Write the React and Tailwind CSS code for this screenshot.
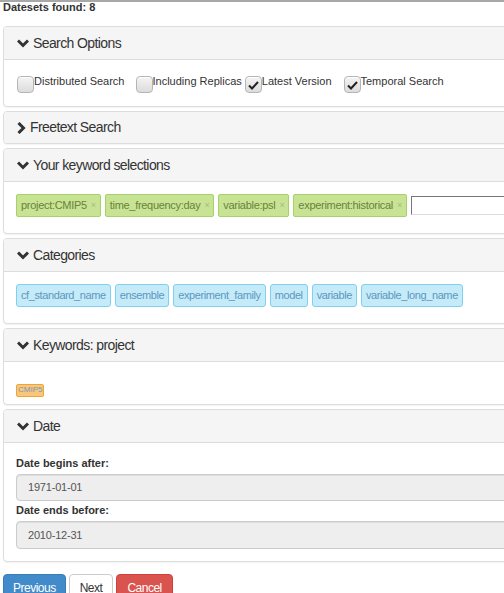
import React from "react";

const ChevronDown = () => (
  <svg width="12" height="9" viewBox="0 0 12 9" className="shrink-0">
    <path d="M1 1.5 L6 6.5 L11 1.5" fill="none" stroke="#333" strokeWidth="3" strokeLinejoin="miter" />
  </svg>
);

const ChevronRight = () => (
  <svg width="9" height="12" viewBox="0 0 9 12" className="shrink-0">
    <path d="M1.5 1 L6.5 6 L1.5 11" fill="none" stroke="#333" strokeWidth="3" strokeLinejoin="miter" />
  </svg>
);

const Panel = ({ title, open = true, children }) => (
  <div className="mb-[4px] w-[540px] rounded-[4px] border border-[#ddd] bg-white shadow-[0_1px_1px_rgba(0,0,0,0.05)]">
    <div
      className={
        "flex items-center gap-[4px] rounded-t-[3px] bg-[#f5f5f5] pl-[13px] text-[14px] tracking-[-0.6px] text-[#333] " +
        (open ? "h-[33px] border-b border-[#ddd]" : "h-[31px] rounded-b-[3px]")
      }
    >
      {open ? <ChevronDown /> : <ChevronRight />}
      <span>{title}</span>
    </div>
    {open && children}
  </div>
);

const Checkbox = ({ label, checked, className = "" }) => (
  <label className={"flex items-start " + className}>
    <span className="flex h-[17px] w-[17px] items-end justify-center rounded-[4px] border border-[#b5b5b5] bg-gradient-to-b from-[#f4f4f4] to-[#dcdcdc] pb-[2px] shadow-[inset_0_1px_0_#fff]">
      {checked && (
        <svg width="11" height="9" viewBox="0 0 11 9">
          <path d="M1 4.5 L4 7.5 L10 1" fill="none" stroke="#222" strokeWidth="2" />
        </svg>
      )}
    </span>
    <span className="-mt-[3px] text-[11px] text-[#333]">{label}</span>
  </label>
);

const GreenTag = ({ text }) => (
  <span className="flex h-[23px] items-center gap-[4px] rounded-[2px] border border-[#a6d26a] bg-[#c8e393] px-[4px] text-[11px] tracking-[-0.3px] text-[#67843a]">
    {text}
    <span className="text-[9px] text-[#a3bd80]">×</span>
  </span>
);

const BlueTag = ({ text }) => (
  <span className="flex h-[23px] items-center rounded-[3px] border border-[#7fd0f2] bg-[#c5ebf9] px-[4px] text-[11px] tracking-[-0.4px] text-[#5c97c0]">
    {text}
  </span>
);

export default function App() {
  return (
    <div className="h-[593px] w-[504px] overflow-hidden border-t-2 border-[#a8a8a8] bg-white font-['Liberation_Sans',Arial,sans-serif]">
      <div className="pl-[3px]">
        <div className="h-[24px] text-[11px] font-bold leading-[10px] text-[#333]">Datesets found: 8</div>

        <Panel title="Search Options">
          <div className="flex h-[46px] items-start pl-[13px] pt-[16px]">
            <Checkbox label="Distributed Search" />
            <Checkbox label="Including Replicas" className="ml-[11px]" />
            <Checkbox label="Latest Version" className="ml-[3px]" checked />
            <Checkbox label="Temporal Search" className="ml-[12px]" checked />
          </div>
        </Panel>

        <Panel title="Freetext Search" open={false} />

        <Panel title="Your keyword selections">
          <div className="flex h-[51px] items-start gap-[4px] pl-[12px] pt-[12px]">
            <GreenTag text="project:CMIP5" />
            <GreenTag text="time_frequency:day" />
            <GreenTag text="variable:psl" />
            <GreenTag text="experiment:historical" />
            <span className="mt-[2px] h-[19px] w-[130px] border border-[#777] border-r-[#ccc] border-b-[#ddd] bg-white" />
          </div>
        </Panel>

        <Panel title="Categories">
          <div className="flex h-[51px] items-start gap-[4px] pl-[12px] pt-[12px]">
            <BlueTag text="cf_standard_name" />
            <BlueTag text="ensemble" />
            <BlueTag text="experiment_family" />
            <BlueTag text="model" />
            <BlueTag text="variable" />
            <BlueTag text="variable_long_name" />
          </div>
        </Panel>

        <Panel title="Keywords: project">
          <div className="h-[42px] pl-[12px] pt-[13px]">
            <span className="inline-flex h-[13px] items-center rounded-[2px] border border-[#f0a431] bg-[#f8c77c] px-[1px] text-[8px] leading-[8px] text-[#7a98b6]">
              CMIP5
            </span>
          </div>
        </Panel>

        <Panel title="Date">
          <div className="pb-[12px] pl-[12px] pt-[14px] text-[#333]">
            <div className="text-[11px] font-bold leading-[13px]">Date begins after:</div>
            <div className="mt-[4px] flex h-[27px] items-center rounded-[4px] border border-[#ccc] bg-[#eee] pl-[11px] text-[11px] tracking-[-0.2px] text-[#555] shadow-[inset_0_1px_1px_rgba(0,0,0,0.075)]">
              1971-01-01
            </div>
            <div className="mt-[3px] text-[11px] font-bold leading-[13px]">Date ends before:</div>
            <div className="mt-[4px] flex h-[28px] items-center rounded-[4px] border border-[#ccc] bg-[#eee] pl-[11px] text-[11px] tracking-[-0.2px] text-[#555] shadow-[inset_0_1px_1px_rgba(0,0,0,0.075)]">
              2010-12-31
            </div>
          </div>
        </Panel>

        <div className="mt-[12px] flex gap-[3px]">
          <button className="flex h-[34px] items-start rounded-[4px] border border-[#357ebd] bg-[#428bca] px-[9px] pt-[4px] text-[12px] tracking-[-0.5px] text-white">
            Previous
          </button>
          <button className="flex h-[34px] items-start rounded-[4px] border border-[#ccc] bg-white px-[10px] pt-[4px] text-[12px] tracking-[-0.5px] text-[#333]">
            Next
          </button>
          <button className="flex h-[34px] items-start rounded-[4px] border border-[#d43f3a] bg-[#d9534f] px-[10px] pt-[4px] text-[12px] tracking-[-0.5px] text-white">
            Cancel
          </button>
        </div>
      </div>
    </div>
  );
}
